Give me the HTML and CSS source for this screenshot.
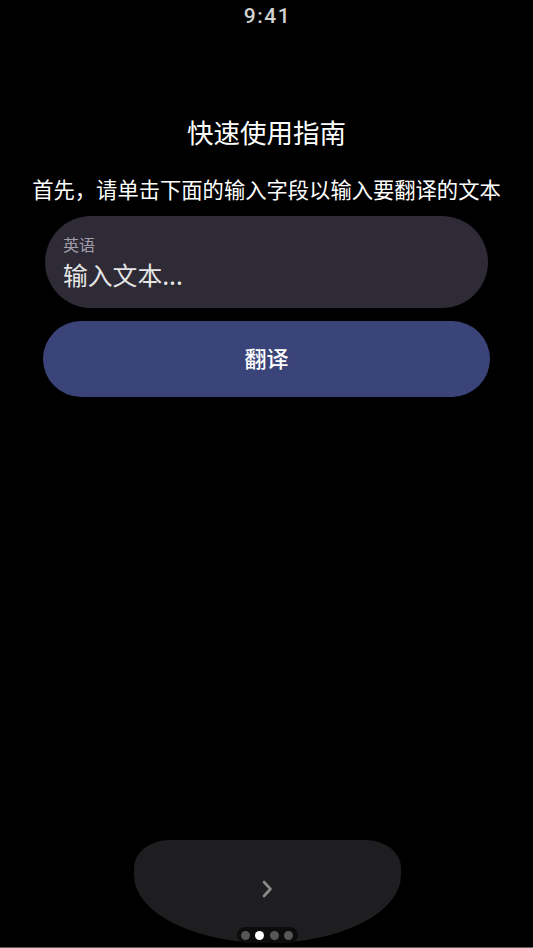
FILE: index.html
```html
<!DOCTYPE html>
<html lang="zh-CN">
<head>
<meta charset="utf-8">
<title>快速使用指南</title>
<link rel="stylesheet" href="styles.css">
</head>
<body>
<div class="screen">
  <div class="status"><span class="time">9:41</span></div>
  <h1 class="title">快速使用指南</h1>
  <p class="subtitle">首先，请单击下面的输入字段以输入要翻译的文本</p>
  <div class="field">
    <div class="field-label">英语</div>
    <div class="field-input">输入文本...</div>
  </div>
  <div class="btn">翻译</div>
  <div class="footer">
    <div class="nav">
      <svg class="chev" width="12" height="18" viewBox="0 0 12 18"><polyline points="3,2 9.5,9 3,16" fill="none" stroke="#8a8a8a" stroke-width="2.6" stroke-linecap="round" stroke-linejoin="round"/></svg>
      <div class="dots">
        <span class="dot"></span>
        <span class="dot active"></span>
        <span class="dot"></span>
        <span class="dot"></span>
      </div>
    </div>
    <div class="baseline"></div>
  </div>
</div>
</body>
</html>
```
FILE: styles.css
```css
html, body {
  margin: 0;
  padding: 0;
  background: #000;
}
body {
  font-family: "Noto Sans CJK SC", "Noto Sans", sans-serif;
  color: #fff;
}
.screen {
  width: 533px;
  height: 948px;
  display: flex;
  flex-direction: column;
  align-items: center;
  overflow: hidden;
}
.status {
  height: 32px;
  display: flex;
  align-items: center;
  justify-content: center;
  width: 100%;
}
.time {
  font-family: "Roboto", "Noto Sans", sans-serif;
  font-weight: 500;
  font-size: 21px;
  line-height: 32px;
  letter-spacing: 1.5px;
  color: #d2d2d2;
  margin-left: 2px;
}
.title {
  margin: 83px 0 0;
  font-size: 26.5px;
  line-height: 34px;
  font-weight: 400;
  color: #fff;
}
.subtitle {
  margin: 25px 0 0;
  font-size: 21.3px;
  line-height: 30px;
  color: #fff;
  white-space: nowrap;
}
.field {
  margin-top: 12px;
  width: 443px;
  height: 92px;
  box-sizing: border-box;
  padding: 18px 18px 0;
  border-radius: 46px;
  background: #2e2a36;
}
.field-label {
  font-size: 16px;
  line-height: 20px;
  color: #a29eaa;
}
.field-input {
  margin-top: 5px;
  font-size: 24.8px;
  line-height: 30px;
  color: #e6e6e6;
}
.btn {
  margin-top: 13px;
  width: 447px;
  height: 76px;
  box-sizing: border-box;
  padding-bottom: 5px;
  border-radius: 38px;
  background: #3a4479;
  display: flex;
  align-items: center;
  justify-content: center;
  font-size: 22px;
  font-weight: 500;
  color: #fff;
}
.footer {
  margin-top: auto;
  width: 100%;
  display: flex;
  flex-direction: column;
  align-items: center;
}
.nav {
  position: relative;
  width: 267px;
  height: 103px;
  background: #1e1e20;
  border-radius: 35px 35px 50% 50% / 28px 28px 68px 68px;
  display: flex;
  justify-content: center;
  margin-left: 1px;
}
.chev {
  margin-top: 40px;
}
.dots {
  position: absolute;
  left: 103px;
  bottom: 0;
  width: 61px;
  height: 16px;
  box-sizing: border-box;
  border-radius: 8px;
  background: #0c0c0c;
  display: flex;
  align-items: center;
  justify-content: center;
  gap: 5.5px;
}
.dot {
  width: 9px;
  height: 9px;
  border-radius: 50%;
  background: #575757;
}
.dot.active {
  background: #fff;
}
.baseline {
  margin-top: 4px;
  width: 100%;
  height: 1px;
  background: #5e5e5e;
}
```
